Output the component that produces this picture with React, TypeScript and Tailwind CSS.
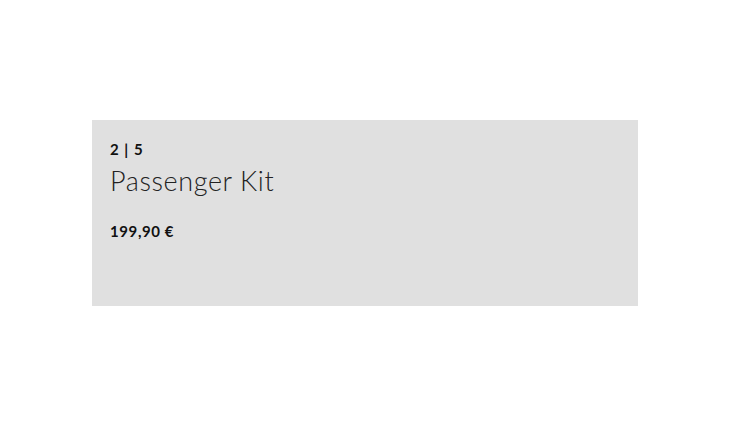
export default function App() {
  return (
    <div className="w-[730px] h-[425px] bg-white pt-[120px] pl-[92px]" style={{ fontFamily: 'Lato, "Open Sans", sans-serif' }}>
      <div className="w-[546px] h-[186px] bg-[#e0e0e0] px-[18px] pt-[19px]">
        <div className="text-[15px] leading-[20px] font-bold text-[#111] tracking-[1px]">2 | 5</div>
        <h2 className="mt-[6px] text-[27px] leading-[32px] font-light text-[#222] tracking-[0.6px]">Passenger Kit</h2>
        <div className="mt-[24px] text-[15px] leading-[20px] font-bold text-[#111] tracking-[0.6px]">199,90 €</div>
      </div>
    </div>
  );
}
